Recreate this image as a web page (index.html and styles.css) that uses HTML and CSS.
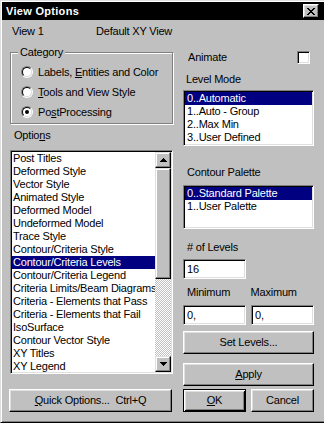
FILE: index.html
```
<!DOCTYPE html>
<html>
<head>
<meta charset="utf-8">
<link rel="stylesheet" href="styles.css">
</head>
<body>
<div class="window">
  <div class="titlebar">
    <span class="title">View Options</span>
    <span class="close"><svg width="8" height="7" viewBox="0 0 8 7" shape-rendering="crispEdges"><path d="M0 0h2v1h-2z M6 0h2v1h-2z M1 1h2v1h-2z M5 1h2v1h-2z M2 2h4v1h-4z M3 3h2v1h-2z M2 4h4v1h-4z M1 5h2v1h-2z M5 5h2v1h-2z M0 6h2v1h-2z M6 6h2v1h-2z"/></svg></span>
  </div>
  <div class="content">
    <div class="toprow">
      <span class="viewname">View 1</span>
      <span>Default XY View</span>
    </div>
    <div class="cols">
      <div class="leftcol">
        <fieldset class="group">
          <legend>Category</legend>
          <div class="radios">
            <div class="radio"><span class="circle"><span class="circle-in"></span></span><span>Labels, <u>E</u>ntities and Color</span></div>
            <div class="radio"><span class="circle"><span class="circle-in"></span></span><span><u>T</u>ools and View Style</span></div>
            <div class="radio"><span class="circle"><span class="circle-in"><span class="dot"></span></span></span><span>Po<u>s</u>tProcessing</span></div>
          </div>
        </fieldset>
        <div class="label opts">Optio<u>n</u>s</div>
        <div class="listbox biglist">
          <div class="items">
            <div class="item">Post Titles</div>
            <div class="item">Deformed Style</div>
            <div class="item">Vector Style</div>
            <div class="item">Animated Style</div>
            <div class="item">Deformed Model</div>
            <div class="item">Undeformed Model</div>
            <div class="item">Trace Style</div>
            <div class="item">Contour/Criteria Style</div>
            <div class="item sel">Contour/Criteria Levels</div>
            <div class="item">Contour/Criteria Legend</div>
            <div class="item">Criteria Limits/Beam Diagrams</div>
            <div class="item">Criteria - Elements that Pass</div>
            <div class="item">Criteria - Elements that Fail</div>
            <div class="item">IsoSurface</div>
            <div class="item">Contour Vector Style</div>
            <div class="item">XY Titles</div>
            <div class="item">XY Legend</div>
          </div>
          <div class="scrollbar">
            <div class="sbtn"><svg width="7" height="4" viewBox="0 0 7 4" shape-rendering="crispEdges"><path d="M3 0h1v1h-1z M2 1h3v1h-3z M1 2h5v1h-5z M0 3h7v1h-7z"/></svg></div>
            <div class="thumb"></div>
            <div class="track"></div>
            <div class="sbtn"><svg width="7" height="4" viewBox="0 0 7 4" shape-rendering="crispEdges"><path d="M0 0h7v1h-7z M1 1h5v1h-5z M2 2h3v1h-3z M3 3h1v1h-1z"/></svg></div>
          </div>
        </div>
        <div class="button quick"><span><u>Q</u>uick Options...  Ctrl+Q</span></div>
      </div>
      <div class="rightcol">
        <div class="animrow">
          <span>Animate</span>
          <span class="checkbox"></span>
        </div>
        <div class="label lm">Level Mode</div>
        <div class="listbox levellist">
          <div class="item sel">0..Automatic</div>
          <div class="item">1..Auto - Group</div>
          <div class="item">2..Max Min</div>
          <div class="item">3..User Defined</div>
        </div>
        <div class="label cp">Contour Palette</div>
        <div class="listbox palettelist">
          <div class="item sel">0..Standard Palette</div>
          <div class="item">1..User Palette</div>
        </div>
        <div class="label nl"># of Levels</div>
        <div class="field small">16</div>
        <div class="pair labels">
          <span class="plabel">Minimum</span>
          <span class="plabel">Maximum</span>
        </div>
        <div class="pair inputs">
          <div class="field small">0,</div>
          <div class="field small">0,</div>
        </div>
        <div class="button wide setlv"><span>Set Levels...</span></div>
        <div class="button wide apply"><span><u>A</u>pply</span></div>
        <div class="pair okrow">
          <div class="button default small"><span><u>O</u>K</span></div>
          <div class="button small"><span>Cancel</span></div>
        </div>
      </div>
    </div>
  </div>
</div>
</body>
</html>
```
FILE: styles.css
```
* { box-sizing: border-box; }
html, body { margin: 0; padding: 0; }
body {
  background: #c0c0c0;
  font-family: "Liberation Sans", Arial, sans-serif;
  font-size: 11px;
  line-height: 13px;
  letter-spacing: -0.2px;
  color: #000;
  overflow: hidden;
}
u { text-decoration: underline; text-underline-offset: 1px; }
.window {
  width: 324px;
  height: 423px;
  background: #c0c0c0;
  border-top: 1px solid #dfdfdf;
  border-left: 1px solid #dfdfdf;
  border-bottom: 1px solid #000;
  box-shadow: inset 1px 1px 0 #fff, inset 0 -1px 0 #808080;
  padding: 1px 0 1px 1px;
  display: flex;
  flex-direction: column;
}
.titlebar {
  height: 18px;
  background: #000;
  color: #fff;
  display: flex;
  align-items: center;
  padding-left: 4px;
}
.title { font-weight: bold; font-size: 11px; letter-spacing: 0.3px; }
.close {
  margin-left: auto;
  margin-right: 5px;
  width: 16px;
  height: 14px;
  background: #c0c0c0;
  border: 1px solid;
  border-color: #fff #000 #000 #fff;
  box-shadow: inset -1px -1px 0 #808080, inset 1px 1px 0 #dfdfdf;
  display: flex;
  align-items: center;
  justify-content: center;
  padding: 0 1px 0 0;
}
.close svg { display: block; fill: #000; }
.content {
  display: flex;
  flex-direction: column;
  padding: 5px 0 0 7px;
}
.toprow { display: flex; height: 13px; padding-left: 3px; }
.viewname { width: 84px; }
.cols { display: flex; gap: 10px; margin-top: 6px; }
.leftcol { width: 164px; display: flex; flex-direction: column; }
.rightcol { width: 131px; display: flex; flex-direction: column; }

.group {
  margin: 2px 0 0 1px;
  width: 163px;
  height: 78px;
  padding: 0 0 0 10px;
  border: 1px solid #808080;
  box-shadow: inset 1px 1px 0 #fff, 1px 1px 0 #fff;
  min-width: 0;
}
.group legend {
  padding: 0 2px;
  margin-left: -3px;
  background: #c0c0c0;
  line-height: 13px;
}
.radios { padding-top: 3px; display: flex; flex-direction: column; }
.radio { height: 20px; display: flex; align-items: center; gap: 5px; }
.circle {
  width: 12px;
  height: 12px;
  border-radius: 50%;
  border: 1px solid;
  border-color: #808080 #fff #fff #808080;
  display: flex;
}
.circle-in {
  flex: 1;
  border-radius: 50%;
  border: 1px solid;
  border-color: #000 #dfdfdf #dfdfdf #000;
  background: #fff;
  display: flex;
  align-items: center;
  justify-content: center;
}
.dot { width: 4px; height: 4px; border-radius: 50%; background: #000; }

.label { height: 13px; }
.opts { margin-top: 5px; padding-left: 5px; }

.listbox {
  background: #fff;
  border: 1px solid;
  border-color: #808080 #fff #fff #808080;
  box-shadow: inset 1px 1px 0 #000, inset -1px -1px 0 #dfdfdf;
  padding: 1px;
  overflow: hidden;
}
.item { height: 13px; padding-left: 1px; white-space: nowrap; }
.item.sel { background: #000080; color: #fff; }

.biglist {
  margin: 8px 0 0 1px;
  width: 163px;
  height: 224px;
  display: flex;
}
.items { flex: 1; overflow: hidden; }
.scrollbar { width: 16px; display: flex; flex-direction: column; }
.sbtn, .thumb {
  background: #c0c0c0;
  border: 1px solid;
  border-color: #dfdfdf #000 #000 #dfdfdf;
  box-shadow: inset -1px -1px 0 #808080, inset 1px 1px 0 #fff;
}
.sbtn { height: 16px; display: flex; align-items: center; justify-content: center; }
.sbtn svg { display: block; fill: #000; }
.thumb { height: 111px; }
.track {
  flex: 1;
  background: repeating-conic-gradient(#c0c0c0 0 25%, #fff 0 50%) 0 0 / 2px 2px;
}

.button {
  background: #c0c0c0;
  border: 1px solid;
  border-color: #fff #000 #000 #fff;
  box-shadow: inset -1px -1px 0 #808080, inset 1px 1px 0 #dfdfdf;
  display: flex;
  align-items: center;
  justify-content: center;
  height: 23px;
  white-space: pre;
}
.button.default {
  border: 1px solid #000;
  box-shadow: inset 1px 1px 0 #fff, inset -1px -1px 0 #000, inset 2px 2px 0 #dfdfdf, inset -2px -2px 0 #808080;
}
.quick { width: 163px; margin-top: 15px; }

.animrow {
  margin-top: 7px;
  height: 13px;
  display: flex;
  align-items: center;
  justify-content: space-between;
  padding: 0 4px 0 5px;
}
.checkbox {
  width: 13px;
  height: 13px;
  background: #fff;
  border: 1px solid;
  border-color: #808080 #fff #fff #808080;
  box-shadow: inset 1px 1px 0 #000, inset -1px -1px 0 #dfdfdf;
}
.lm { margin-top: 9px; padding-left: 3px; }
.levellist { margin-top: 4px; height: 56px; }
.levellist .item, .palettelist .item { padding-left: 2px; }
.cp { margin-top: 20px; padding-left: 4px; }
.palettelist { margin-top: 6px; height: 44px; }
.nl { margin-top: 12px; padding-left: 4px; }
.field {
  background: #fff;
  border: 1px solid;
  border-color: #808080 #fff #fff #808080;
  box-shadow: inset 1px 1px 0 #000, inset -1px -1px 0 #dfdfdf;
  height: 20px;
  padding: 3px 0 0 3px;
}
.field.small { width: 63px; }
.rightcol > .field { margin-top: 5px; }
.pair { display: flex; justify-content: space-between; }
.labels { margin-top: 7px; height: 13px; padding-left: 4px; }
.plabel { width: 68px; }
.inputs { margin-top: 6px; }
.button.wide { width: 131px; }
.setlv { margin-top: 6px; }
.apply { margin-top: 9px; }
.okrow { margin-top: 3px; }
.button.small { width: 63px; }
```
